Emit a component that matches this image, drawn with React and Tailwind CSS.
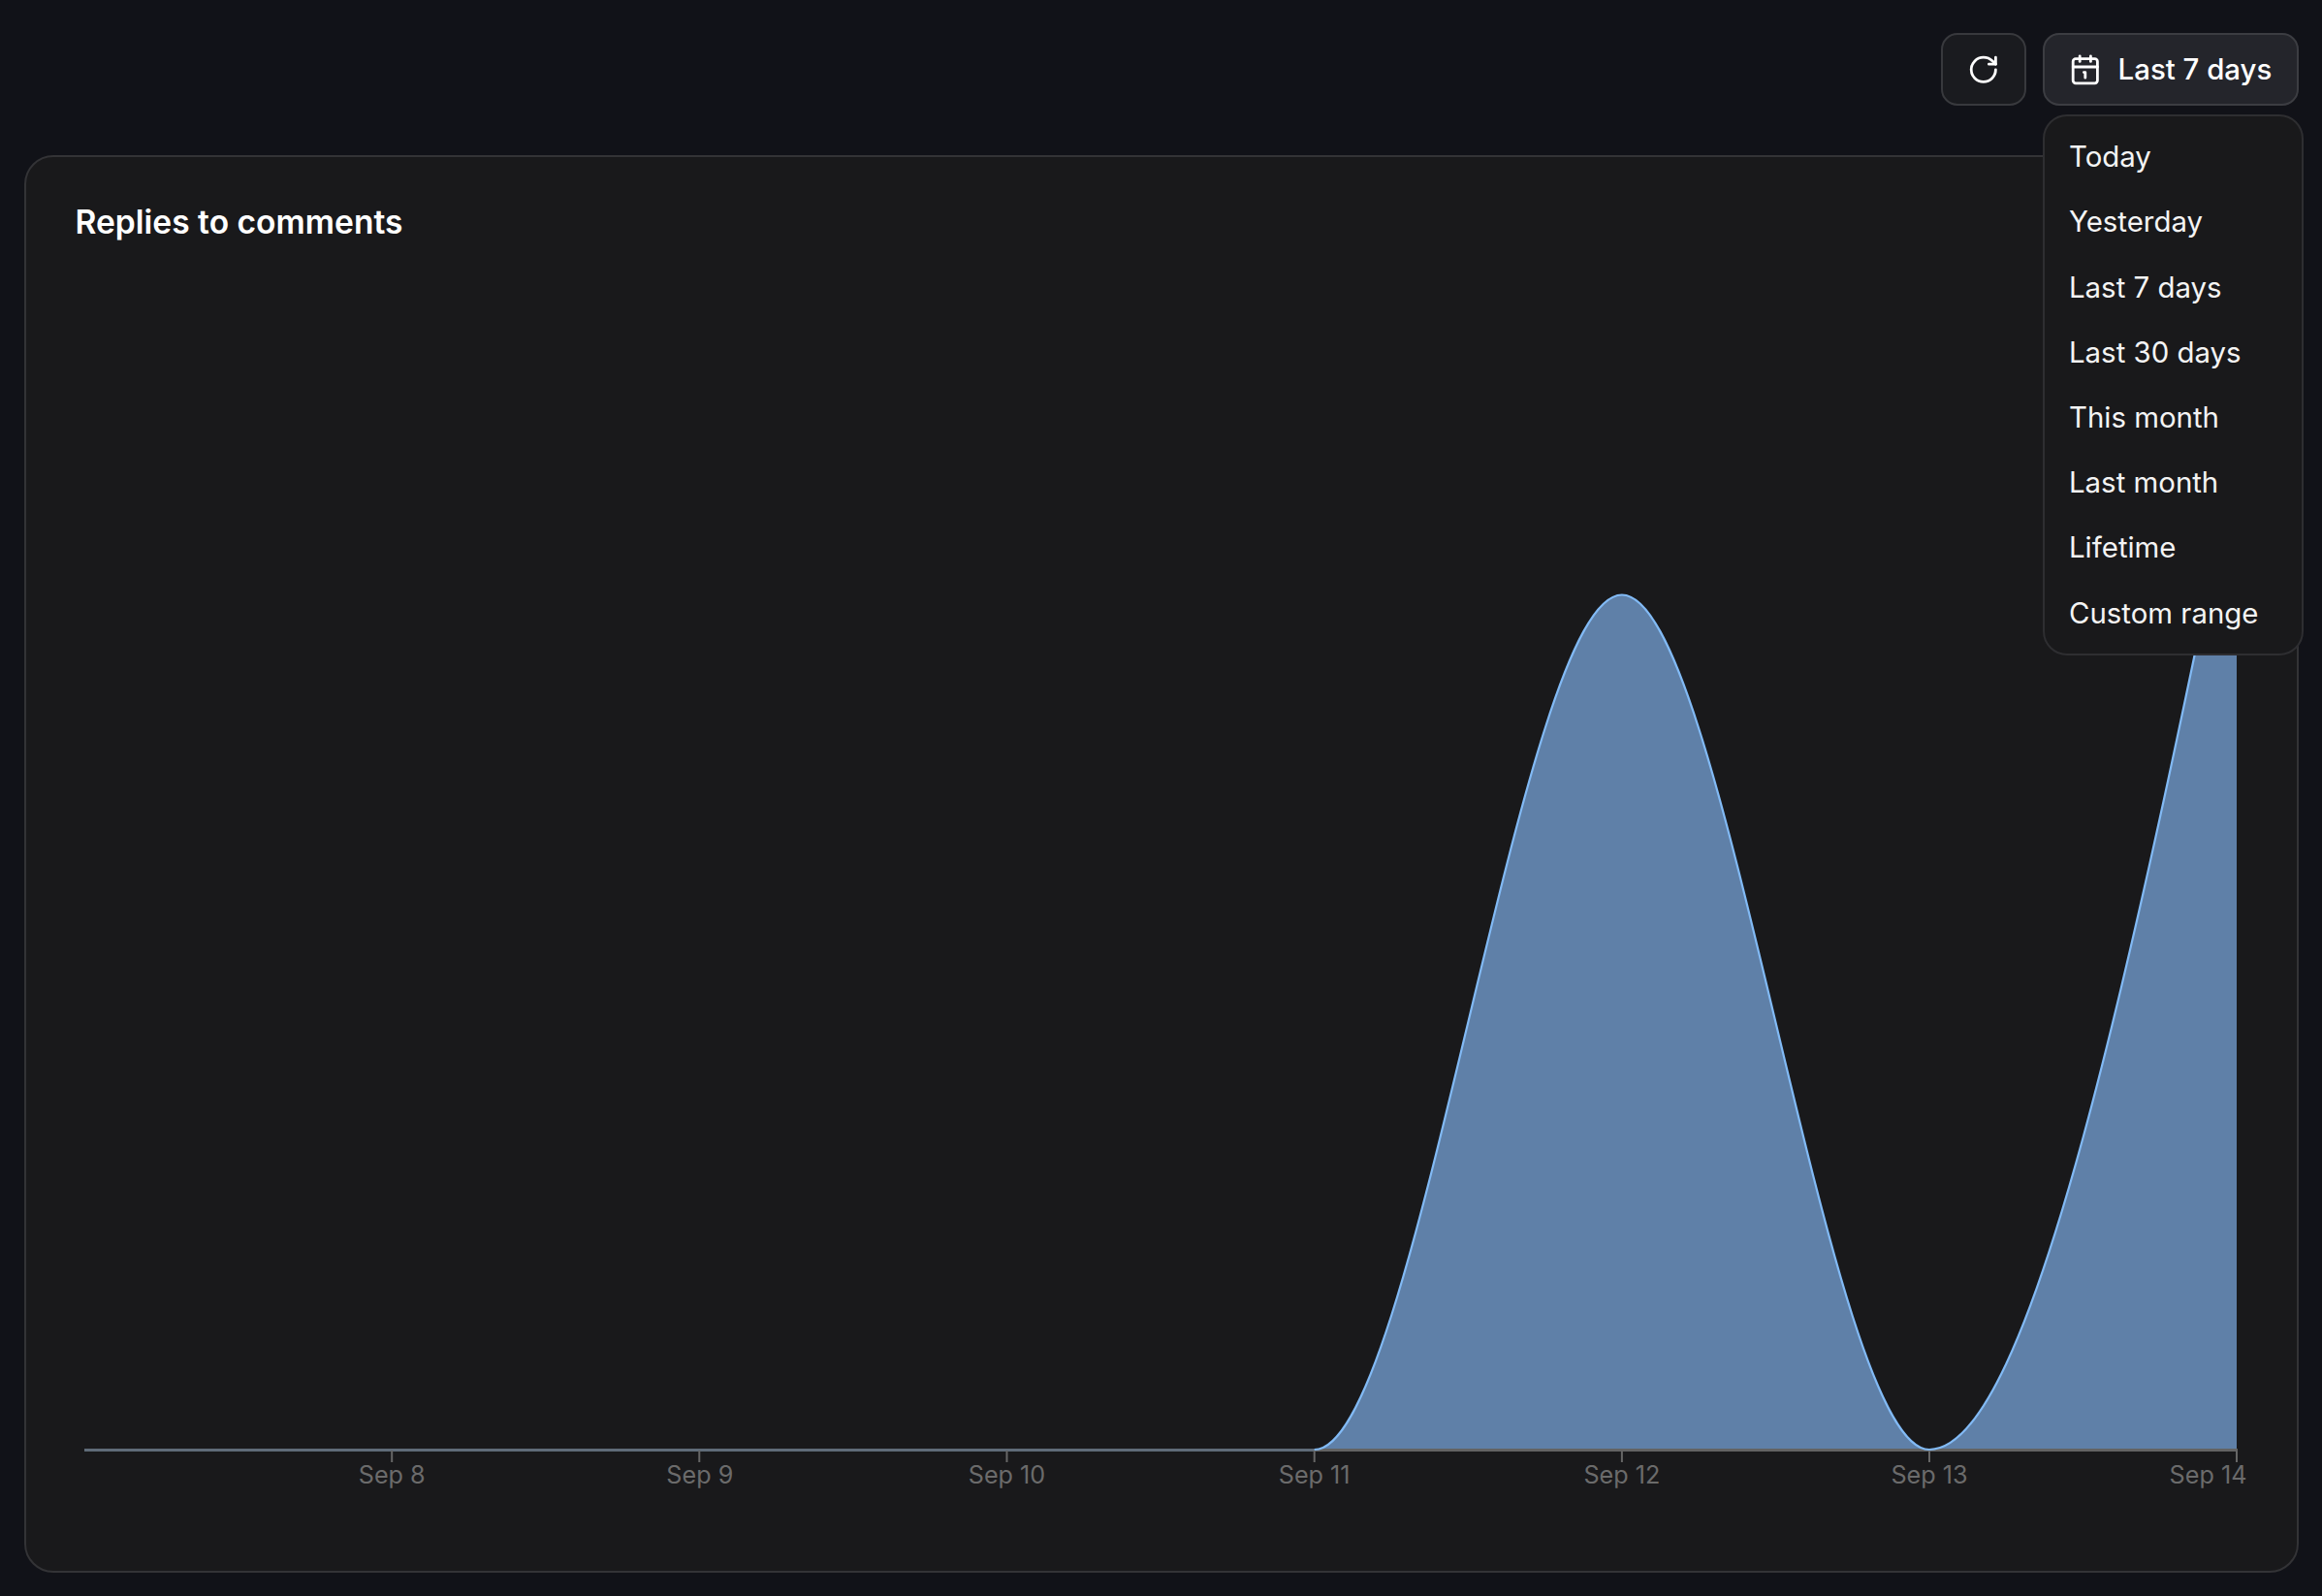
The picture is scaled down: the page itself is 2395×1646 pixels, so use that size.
import React from "react";
import { RotateCw, Calendar1 } from "lucide-react";

const items = ["Today", "Yesterday", "Last 7 days", "Last 30 days", "This month", "Last month", "Lifetime", "Custom range"];
const ticks = [
  { x: 404.2, c: 404.2, t: "Sep 8" },
  { x: 721.3, c: 721.8, t: "Sep 9" },
  { x: 1038.5, c: 1038.5, t: "Sep 10" },
  { x: 1355.7, c: 1355.7, t: "Sep 11" },
  { x: 1672.9, c: 1672.9, t: "Sep 12" },
  { x: 1990, c: 1990, t: "Sep 13" },
  { x: 2307, c: 2277.5, t: "Sep 14" },
];
const curve =
  "M1355.7,1495 C1461.4,1495 1567.2,613.5 1672.9,613.5 C1778.6,613.5 1884.3,1495 1990,1495 C2095.7,1495 2201.3,980.5 2307,466";

export default function App() {
  return (
    <div className="h-[1646px] w-full overflow-hidden bg-[#111218] pt-[34px] pr-[24px] pb-[25px] pl-[25px] font-['Inter',sans-serif] text-white">
      <div className="flex h-[75px] justify-end gap-[17px]">
        <button className="flex w-[88px] items-center justify-center rounded-[17px] border-2 border-[#38393d] bg-[#1a1b1f] text-white">
          <RotateCw size={33.6} strokeWidth={2} />
        </button>
        <div className="relative">
          <button className="flex h-full w-[264px] items-center gap-[17px] rounded-[17px] border-2 border-[#3c3d42] bg-[#24252b] pl-[25px] text-[29.4px] font-medium text-white">
            <Calendar1 size={33.6} strokeWidth={2} />
            <span className="pt-[1px]">Last 7 days</span>
          </button>
          <div className="absolute top-[84px] left-0 z-10 w-[269px] rounded-[25px] border-2 border-[#2e2e31] bg-[#19191b] pt-[8.7px] pb-[8.1px]">
            {items.map((t) => (
              <div key={t} className="flex h-[67.2px] items-center px-[25px] text-[29.4px] text-[#f4f4f4]">
                {t}
              </div>
            ))}
          </div>
        </div>
      </div>
      <div className="mt-[51px] flex h-[1462px] flex-col rounded-[30px] border-2 border-[#333336] bg-[#19191b]">
        <h2 className="mt-[43px] ml-[50.5px] h-[47px] text-[33.6px] leading-[47px] font-semibold text-white">Replies to comments</h2>
        <svg className="block h-[1367px] w-full" viewBox="0 0 2342 1367">
          <g transform="translate(-27 -252)">
            <path d={`${curve} L2307,1495 Z`} fill="#5f80a8" />
            <line x1="87" y1="1495.5" x2="1356" y2="1495.5" stroke="#5f6b78" strokeWidth="3" />
            <line x1="1356" y1="1495.5" x2="2308" y2="1495.5" stroke="#636363" strokeWidth="3" />
            <path d={curve} fill="none" stroke="#82baf5" strokeWidth="2.2" />
            {ticks.map((k) => (
              <g key={k.t}>
                <line x1={k.x} y1="1496" x2={k.x} y2="1508" stroke="#666666" strokeWidth="2" />
                <text x={k.c} y="1530" textAnchor="middle" fontSize="25.2" fill="#6b6b6b">
                  {k.t}
                </text>
              </g>
            ))}
          </g>
        </svg>
      </div>
    </div>
  );
}
